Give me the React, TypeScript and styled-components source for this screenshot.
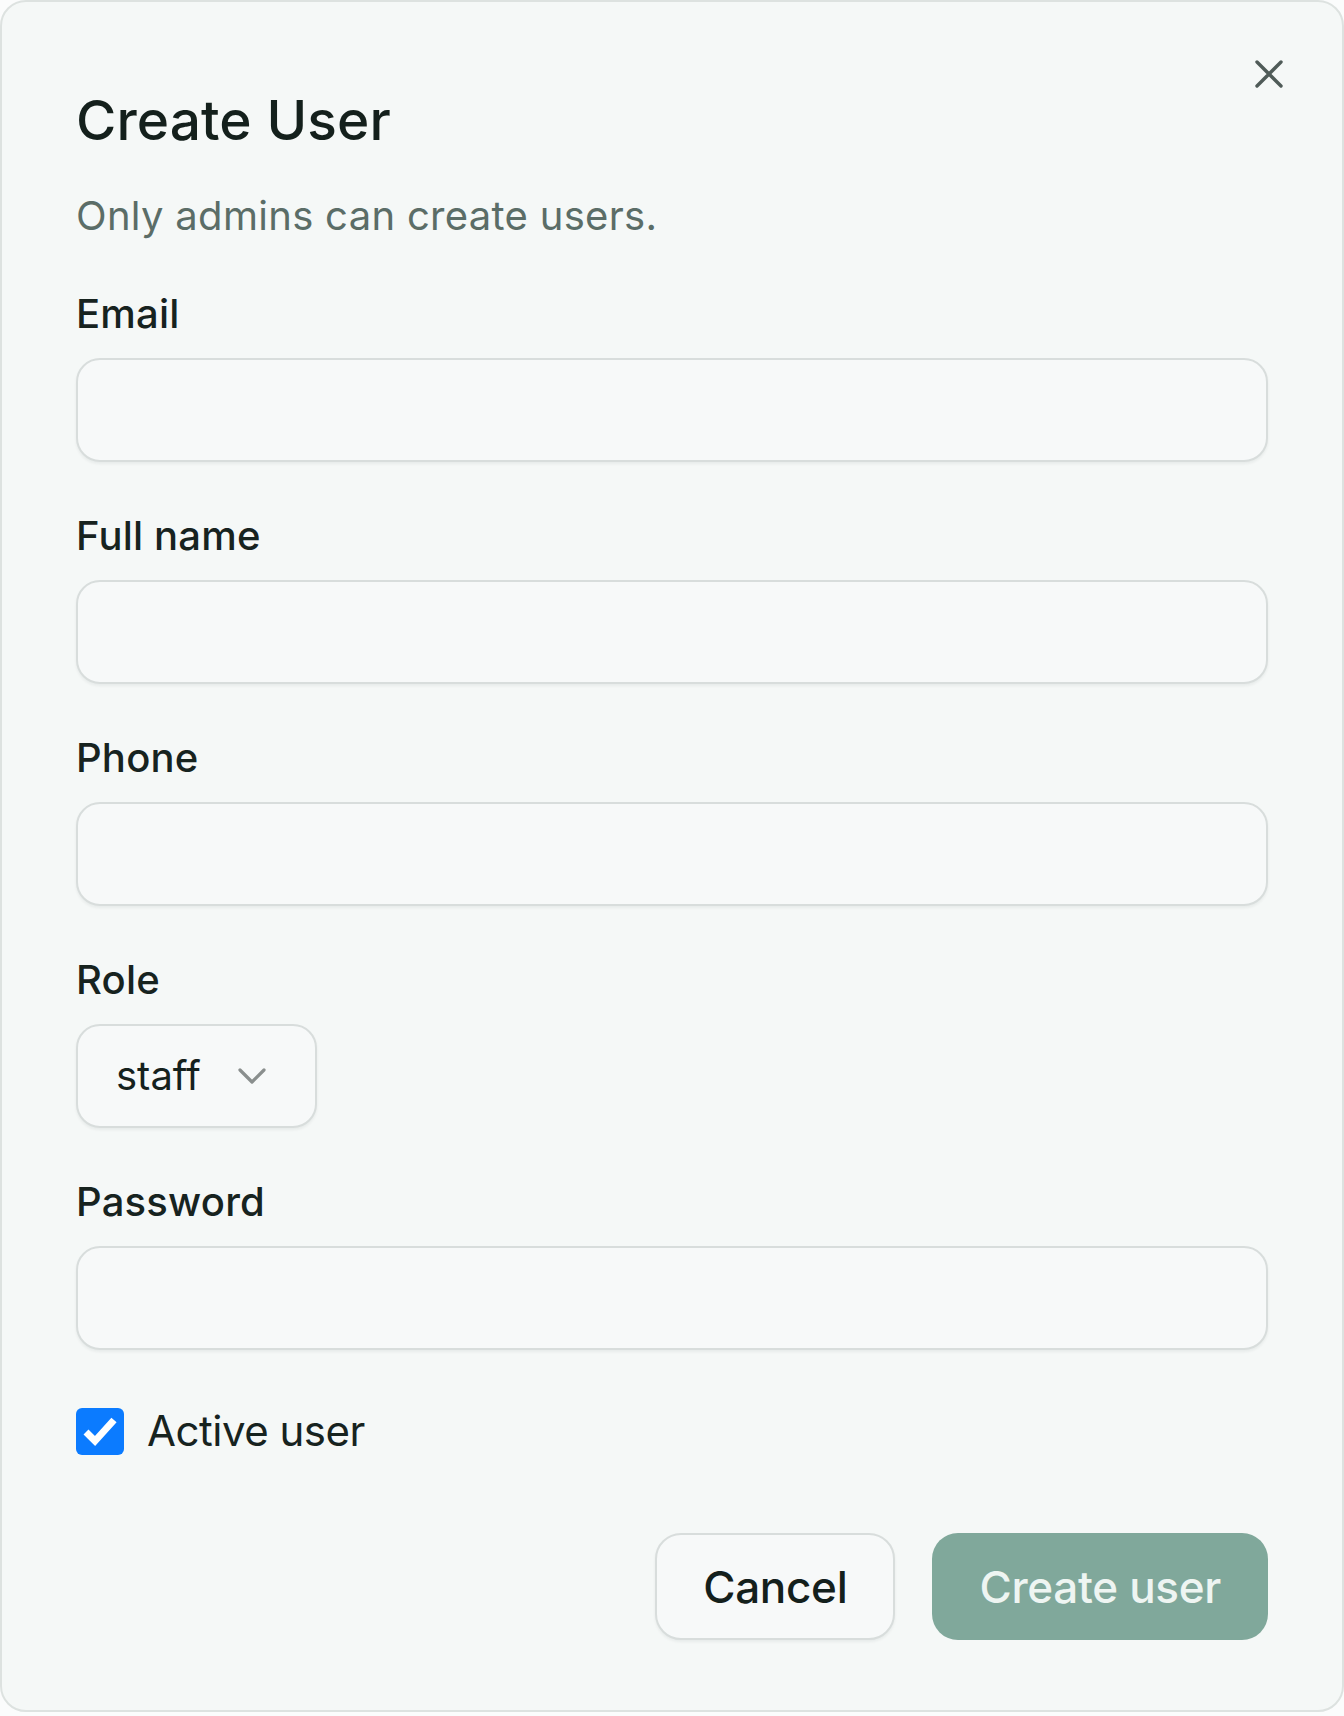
import React from "react";
import styled, { createGlobalStyle } from "styled-components";

const GlobalStyle = createGlobalStyle`
  html, body {
    margin: 0;
    padding: 0;
    background: #fbfcfc;
  }
  * { box-sizing: border-box; }
  body {
    font-family: Inter, "Noto Sans", "Liberation Sans", sans-serif;
    color: #15211d;
  }
`;

const Dialog = styled.section`
  position: relative;
  width: 1344px;
  display: flex;
  flex-direction: column;
  padding: 86px 74px 70px 74px;
  background: #f5f8f7;
  border: 2px solid #dde2e0;
  border-radius: 26px;
`;

const CloseButton = styled.button`
  position: absolute;
  top: 56px;
  right: 57px;
  width: 32px;
  height: 32px;
  padding: 2px;
  border: none;
  background: transparent;
  display: flex;
  align-items: center;
  justify-content: center;
  cursor: pointer;
  color: #4f5b58;
`;

const Title = styled.h2`
  margin: 0;
  font-size: 55px;
  line-height: 64px;
  font-weight: 500;
  color: #14201c;
  letter-spacing: 0.1px;
`;

const Subtitle = styled.p`
  margin: 40px 0 0 0;
  font-size: 40px;
  line-height: 48px;
  font-weight: 400;
  color: #5b6d67;
  letter-spacing: 0.3px;
`;

const Form = styled.form`
  margin-top: 50px;
  display: flex;
  flex-direction: column;
  gap: 50px;
`;

const Field = styled.div`
  display: flex;
  flex-direction: column;
  gap: 20px;
`;

const Label = styled.label`
  font-size: 40px;
  line-height: 48px;
  font-weight: 450;
  color: #17231f;
  letter-spacing: 0.2px;
`;

const TextInput = styled.input`
  width: 100%;
  height: 104px;
  padding: 0 38px;
  border: 2px solid #d8dddc;
  border-radius: 24px;
  background: #f7f9f9;
  box-shadow: 0 2px 3px rgba(20, 40, 35, 0.06);
  font-family: inherit;
  font-size: 40px;
  color: #15211d;
  outline: none;
`;

const SelectBox = styled.button`
  width: 241px;
  height: 104px;
  display: flex;
  align-items: center;
  gap: 37px;
  padding: 0 0 0 38px;
  border: 2px solid #d8dddc;
  border-radius: 24px;
  background: #f7f9f9;
  box-shadow: 0 2px 3px rgba(20, 40, 35, 0.06);
  font-family: inherit;
  font-size: 40px;
  line-height: 48px;
  color: #15211d;
  cursor: pointer;
  text-align: left;
`;

const CheckRow = styled.label`
  margin-top: 7px;
  display: flex;
  align-items: center;
  gap: 23px;
  font-size: 42px;
  line-height: 48px;
  color: #17231f;
  letter-spacing: -0.5px;
  cursor: pointer;
`;

const CheckBox = styled.span`
  width: 48px;
  height: 47px;
  border-radius: 6px;
  background: #0b7bff;
  display: flex;
  align-items: center;
  justify-content: center;
  flex: none;
`;

const Actions = styled.div`
  margin-top: 78px;
  display: flex;
  justify-content: flex-end;
  gap: 37px;
`;

const Button = styled.button<{ $primary?: boolean }>`
  height: 107px;
  padding: 0 ${(p) => (p.$primary ? "47px" : "46px")};
  border-radius: 26px;
  font-family: inherit;
  font-size: 44px;
  font-weight: 450;
  letter-spacing: -0.3px;
  cursor: pointer;
  border: ${(p) => (p.$primary ? "none" : "2px solid #d8dddc")};
  background: ${(p) => (p.$primary ? "#80a89b" : "#f7f9f9")};
  color: ${(p) => (p.$primary ? "#eef5f2" : "#14201c")};
  box-shadow: ${(p) => (p.$primary ? "none" : "0 2px 3px rgba(20, 40, 35, 0.06)")};
`;

const XIcon = () => (
  <svg width="28" height="28" viewBox="0 0 28 28" fill="none">
    <path d="M2 2 L26 26 M26 2 L2 26" stroke="currentColor" strokeWidth="3.4" strokeLinecap="round" />
  </svg>
);

const Chevron = () => (
  <svg width="28" height="17" viewBox="0 0 28 17" fill="none">
    <path d="M2 2 L14 14 L26 2" stroke="#8a8f8e" strokeWidth="3.2" strokeLinecap="round" strokeLinejoin="round" />
  </svg>
);

const Check = () => (
  <svg width="36" height="32" viewBox="0 0 36 32" fill="none">
    <path d="M4 17 L13 26 L32 5" stroke="#ffffff" strokeWidth="7" strokeLinejoin="miter" />
  </svg>
);

const fields = [
  { id: "email", label: "Email", type: "email" },
  { id: "fullname", label: "Full name", type: "text" },
  { id: "phone", label: "Phone", type: "tel" },
];

export default function App() {
  return (
    <>
      <GlobalStyle />
      <Dialog>
        <CloseButton aria-label="Close">
          <XIcon />
        </CloseButton>
        <Title>Create User</Title>
        <Subtitle>Only admins can create users.</Subtitle>
        <Form onSubmit={(e) => e.preventDefault()}>
          {fields.map((f) => (
            <Field key={f.id}>
              <Label htmlFor={f.id}>{f.label}</Label>
              <TextInput id={f.id} type={f.type} />
            </Field>
          ))}
          <Field>
            <Label>Role</Label>
            <SelectBox type="button">
              <span>staff</span>
              <Chevron />
            </SelectBox>
          </Field>
          <Field>
            <Label htmlFor="password">Password</Label>
            <TextInput id="password" type="password" />
          </Field>
          <CheckRow>
            <CheckBox>
              <Check />
            </CheckBox>
            Active user
          </CheckRow>
        </Form>
        <Actions>
          <Button type="button">Cancel</Button>
          <Button type="button" $primary>
            Create user
          </Button>
        </Actions>
      </Dialog>
    </>
  );
}
